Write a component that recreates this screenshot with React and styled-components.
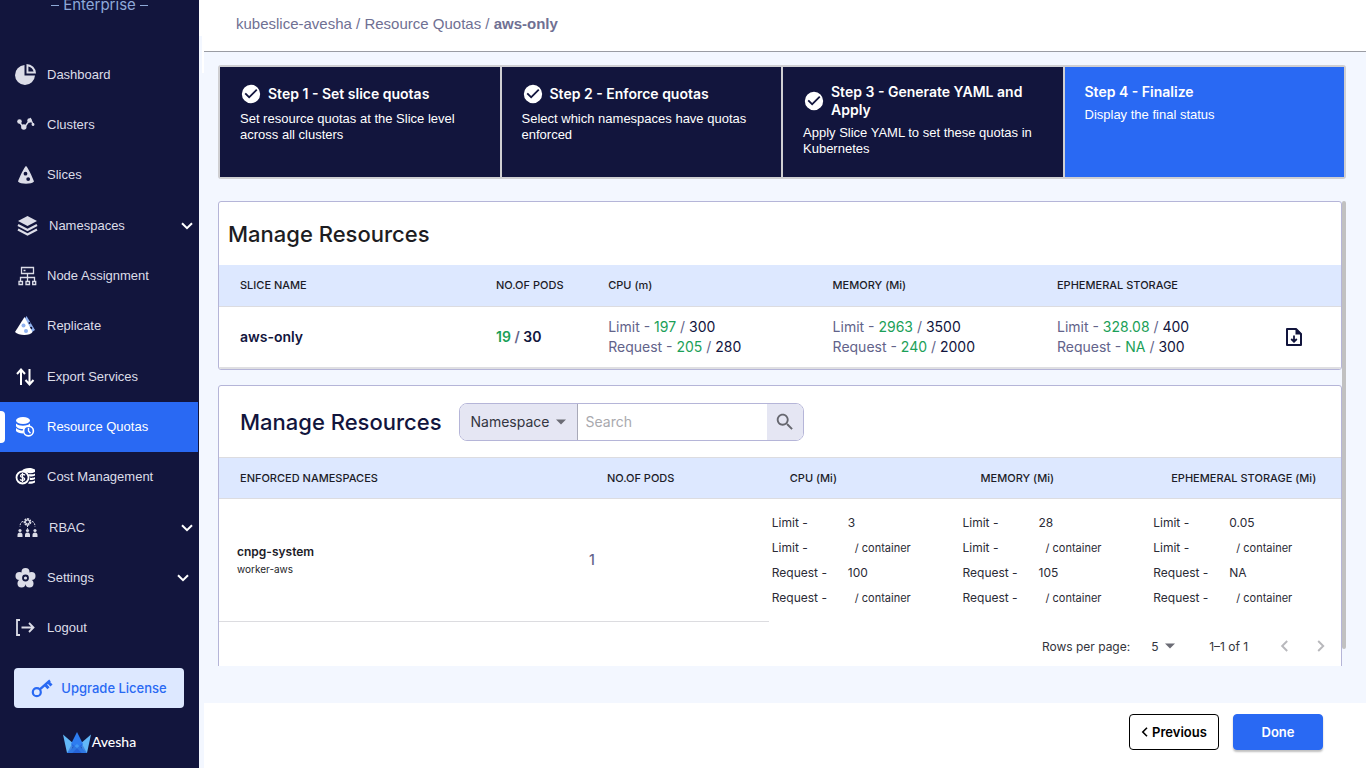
import React from "react";
import styled, { createGlobalStyle, css } from "styled-components";

const navy = "#12153d";
const blue = "#2969f3";
const pale = "#f3f7ff";
const band = "#dde8ff";
const line = "#b5b5d8";
const green = "#1ba058";
const narrow = `"Liberation Sans", Arial, sans-serif`;

const Global = createGlobalStyle`
  *, *::before, *::after { box-sizing: border-box; }
  html, body { margin: 0; background: #fff; }
  body, button, input, select { font-family: Inter, "Liberation Sans", sans-serif; }
  h2, h3, p, ul { margin: 0; padding: 0; }
  button, input, select { margin: 0; }
`;

const Page = styled.div`
  display: grid;
  grid-template-columns: 204px minmax(0, 1fr);
  align-items: start;
`;

/* ---------- sidebar ---------- */
const Rail = styled.div`
  background:
    linear-gradient(#fff, #fff) top right / 5px 36px no-repeat,
    linear-gradient(#fff, #fff) top right / 2px 73px no-repeat,
    ${pale};
  padding-right: 5px;
`;
const Sidebar = styled.aside`
  height: 768px;
  overflow: hidden;
  background: ${navy};
  display: flex;
  flex-direction: column;
`;
const Edition = styled.div`
  height: 50px;
  flex: none;
  margin-top: -6px;
  padding-bottom: 28px;
  display: flex;
  align-items: center;
  justify-content: center;
  gap: 4px;
  color: #8ea9d8;
  font-size: 15px;
  line-height: 22px;
  &::before, &::after {
    content: "";
    width: 8px;
    height: 1px;
    background: currentColor;
  }
`;
const NavList = styled.ul`
  list-style: none;
  padding-top: 6px;
`;
const NavItem = styled.li`
  height: 50px;
  &:nth-child(3n) { height: 51px; }
`;
const NavLink = styled.a`
  height: 50px;
  padding: 0 ${(p) => p.$inset || 5}px 0 14px;
  margin-right: 1px;
  display: flex;
  align-items: center;
  color: ${(p) => (p.$active ? "#fff" : "#dcdde8")};
  background: ${(p) => (p.$active ? blue : "transparent")};
  font-family: ${narrow};
  font-size: 13px;
  line-height: 18px;
  text-decoration: none;
  svg { flex: none; }
  span { flex: 1; padding-left: 9px; white-space: nowrap; }
  ${(p) =>
    p.$active &&
    css`
      padding-left: 0;
      &::before {
        content: "";
        width: 5px;
        height: 32px;
        margin-right: 9px;
        background: #fff;
        border-radius: 0 4px 4px 0;
      }
    `}
`;
const Upgrade = styled.button`
  margin: 14px 15px 0 14px;
  height: 40px;
  flex: none;
  border: 0;
  border-radius: 4px;
  background: ${band};
  color: ${blue};
  font-size: 13px;
  font-weight: 500;
  display: flex;
  align-items: center;
  justify-content: center;
  gap: 8px;
  white-space: nowrap;
`;
const Brand = styled.div`
  margin-top: 23px;
  display: flex;
  justify-content: center;
  align-items: center;
  gap: 1px;
  color: #fff;
  font: 500 14px/22px Lato, sans-serif;
`;

/* ---------- main ---------- */
const Main = styled.main`
  min-width: 0;
`;
const Header = styled.header`
  height: 52px;
  padding: 0 32px;
  border-bottom: 1px solid #9a9ca3;
  display: flex;
  align-items: center;
  padding-bottom: 4px;
  color: #6f7093;
  font-family: ${narrow};
  font-size: 15px;
  line-height: 20px;
  white-space: pre;
  a { color: inherit; text-decoration: none; }
  b { font-weight: 700; }
`;
const Body = styled.div`
  background: ${pale};
  padding: 13px 20px 37px 14px;
`;
const Steps = styled.div`
  display: grid;
  grid-template-columns: repeat(4, minmax(0, 1fr));
  gap: 2px;
  padding: 2px;
  border-radius: 3px;
  background: #cfcfd2;
`;
const Step = styled.section`
  height: 110px;
  padding: 16px 19px 0 20px;
  background: ${(p) => (p.$active ? blue : navy)};
  color: #fff;
`;
const StepHead = styled.div`
  display: flex;
  align-items: center;
  gap: 6px;
  svg { flex: none; }
  h3 { font-size: 14px; line-height: 18px; font-weight: 600; }
`;
const StepText = styled.p`
  margin-top: 6px;
  font-family: ${narrow};
  font-size: 13px;
  line-height: 16px;
`;

const Scroller = styled.div`
  margin-top: 22px;
  height: 465px;
  display: grid;
  grid-template-columns: minmax(0, 1fr) 4px;
  overflow: hidden;
`;
const Bar = styled.div`
  height: 448px;
  border-radius: 2px;
  background: #c1c1c1;
`;
const Card = styled.section`
  border: 1px solid ${line};
  border-radius: 3px;
  background: #fff;
  overflow: hidden;
  & + & { margin-top: 15px; }
`;
const Title = styled.h2`
  font-size: 22px;
  line-height: 30px;
  font-weight: 500;
  color: ${(p) => p.$color};
  white-space: nowrap;
`;
const CardHead = styled.div`
  display: flex;
  align-items: center;
  gap: 17px;
  height: ${(p) => p.$h}px;
  padding: 0 ${(p) => p.$pad}px;
`;
const Table = styled.table`
  width: 100%;
  border-collapse: collapse;
  table-layout: fixed;
  th {
    height: 41px;
    padding: 0;
    text-align: left;
    background: ${band};
    border-bottom: 1px solid #dcdce0;
    font-size: 11px;
    line-height: 16px;
    font-weight: 500;
    color: #1c1c28;
    white-space: nowrap;
  }
  td { padding: 0; white-space: nowrap; }
`;
const SliceTable = styled(Table)`
  border-bottom: 2px solid #dfdfe2;
  th, td { padding-left: 1px; }
  th:first-child, td:first-child { padding-left: 21px; }
  td { height: 62px; font-size: 14px; line-height: 20px; color: ${navy}; }
`;
const Amount = styled.div`
  color: #62638a;
  font-weight: ${(p) => (p.$bold ? 600 : 400)};
  i { font-style: normal; color: ${green}; }
  b { font-weight: inherit; color: ${navy}; }
`;
const IconButton = styled.button`
  border: 0;
  padding: 0;
  background: none;
  display: flex;
  color: inherit;
`;
const NsTable = styled(Table)`
  th { border-top: 1px solid #dcdce0; padding-left: 21px; }
  td { height: 123px; padding-left: 3px; }
  td:first-child { padding-left: 18px; }
  td:nth-child(-n+2) { border-bottom: 1px solid #dcdce0; }
`;
const Name = styled.div`
  font-size: 12px;
  line-height: 18px;
  font-weight: 600;
  color: #1c1c28;
  small { display: block; font-size: 10px; line-height: 16px; font-weight: 400; }
`;
const Pods = styled.div`
  font-size: 14px;
  line-height: 20px;
  color: #62638a;
  font-weight: 500;
`;
const Usage = styled.dl`
  margin: 0;
  display: grid;
  grid-template-columns: 76px 1fr;
  grid-auto-rows: 25px;
  align-items: center;
  font-size: 12px;
  color: #2b2b36;
  dd { margin: 0; }
  small { font-size: 11px; padding-left: 7px; }
`;
const Search = styled.form`
  height: 38px;
  width: 345px;
  display: flex;
  border: 1px solid ${line};
  border-radius: 8px;
  overflow: hidden;
  font-size: 14px;
`;
const Picker = styled.label`
  position: relative;
  display: flex;
  align-items: center;
  background: #e5e6f3;
  svg { position: absolute; right: 0; pointer-events: none; }
  select {
    appearance: none;
    border: 0;
    background: none;
    color: #333540;
    font-size: inherit;
    height: 100%;
  }
`;
const FieldPicker = styled(Picker)`
  width: 118px;
  border-right: 1px solid #a8a9b8;
  svg { right: 11px; }
  select { width: 117px; padding: 0 11px; }
`;
const SearchInput = styled.input`
  flex: 1;
  min-width: 0;
  border: 0;
  padding: 0 8px;
  font-size: 14px;
  &::placeholder { color: #a9a9ae; opacity: 1; }
`;
const SearchButton = styled.button`
  width: 36px;
  border: 0;
  padding: 0;
  background: #e5e6f3;
  color: #66676f;
  display: flex;
  align-items: center;
  justify-content: center;
`;
const Pager = styled.div`
  height: 48px;
  padding-right: 16px;
  display: flex;
  align-items: center;
  justify-content: flex-end;
  font-size: 12px;
  color: #33343c;
`;
const PagePicker = styled(Picker)`
  background: none;
  margin: 0 34px 0 21px;
  select { width: 24px; padding: 0; font-size: 12px; }
`;
const PageButton = styled(IconButton)`
  color: #b8b8bc;
  margin-left: ${(p) => p.$gap}px;
`;
const Footer = styled.footer`
  padding: 11px 43px 0 0;
  display: flex;
  justify-content: flex-end;
  gap: 14px;
`;
const Action = styled.button`
  width: 90px;
  height: 36px;
  padding: 0;
  border-radius: 4px;
  border: 1px solid ${(p) => (p.$primary ? blue : "#000")};
  background: ${(p) => (p.$primary ? blue : "#fff")};
  color: ${(p) => (p.$primary ? "#fff" : "#000")};
  box-shadow: ${(p) => (p.$primary ? "0 2px 2px rgba(0,0,0,.25)" : "none")};
  font-size: 13px;
  font-weight: 600;
  display: flex;
  align-items: center;
  justify-content: center;
  gap: 4px;
`;

/* ---------- drawings ---------- */
const Svg = ({ w = 24, h = w, vb = "0 0 24 24", children }) => (
  <svg width={w} height={h} viewBox={vb} fill="currentColor" aria-hidden="true">
    {children}
  </svg>
);
const Caret = () => (
  <svg width="10" height="6" viewBox="0 0 10 6" fill="#6b6c75" aria-hidden="true">
    <path d="M0 .5h10L5 5.500z" />
  </svg>
);
const Chevron = () => (
  <svg width="12" height="8" viewBox="0 0 12 8" fill="none" stroke="#fff" strokeWidth="2" aria-hidden="true">
    <path d="M1 1.200l5 5 5-5" />
  </svg>
);
const Check = () => (
  <Svg w={22}>
    <path d="M12 2a10 10 0 1 0 0 20 10 10 0 0 0 0-20zm-2 15-5-5 1.410-1.410L10 14.170l7.590-7.590L19 8z" />
  </Svg>
);
const Arrow = ({ dir = "left", size = 10, sw = 1.6 }) => (
  <svg width={size * 0.7} height={size} viewBox="0 0 7 10" fill="none" stroke="currentColor" strokeWidth={sw} aria-hidden="true">
    <path d={dir === "left" ? "M6 .8L1.800 5 6 9.200" : "M1 .8L5.200 5 1 9.200"} />
  </svg>
);

const icons = {
  dashboard: (
    <Svg vb="1 0 24 24">
      <path d="M11.500 2A10 10 0 1 0 22 12.500H11.500z" />
      <path fillRule="evenodd" d="M13.500 1v9.500H23A9.500 9.500 0 0 0 13.500 1zm1.900 2.400a7 7 0 0 1 5.200 5.200h-5.200z" />
    </Svg>
  ),
  clusters: (
    <Svg>
      <path d="M5 8.500l5 6.500 6.500-9 3 6.500" fill="none" stroke="currentColor" strokeWidth="1.400" />
      <circle cx="5.500" cy="8.500" r="2.300" />
      <circle cx="9.800" cy="14" r="2.700" />
      <circle cx="15.500" cy="7.500" r="2.200" />
      <circle cx="19" cy="11.500" r="1.400" />
    </Svg>
  ),
  slices: (
    <Svg>
      <path fillRule="evenodd" d="M12 3c1 0 6.500 11 8 15.500-2 3-14 3-16 0C5.500 14 11 3 12 3zm-.5 5.800a1.900 1.900 0 1 0 0 3.800 1.900 1.900 0 0 0 0-3.800zm2.700 5.400a1.900 1.900 0 1 0 0 3.800 1.900 1.900 0 0 0 0-3.800z" />
    </Svg>
  ),
  namespaces: (
    <Svg w={26} vb="0 0 26 26">
      <path d="M13.500 3L23 8l-9.500 5L4 8z" />
      <path d="M4 12l9.500 5 9.500-5M4 16.500l9.500 5 9.500-5" fill="none" stroke="currentColor" strokeWidth="2.200" />
    </Svg>
  ),
  nodes: (
    <Svg>
      <path d="M7.500 3.500h12v6h-12zM13.500 9.500v8M6.500 17v-3.500h14V17M5 17.500h3.500v3H5zM12 17.500h3.500v3H12zM18.700 17.500h3v3h-3zM9.500 6.500h2" fill="none" stroke="currentColor" strokeWidth="1.300" />
    </Svg>
  ),
  replicate: (
    <Svg>
      <path fill="#8fb1ef" d="M12.500 2l8.500 14-4.500 3L9 8z" />
      <circle cx="15.500" cy="9" r="1" fill={navy} />
      <circle cx="17" cy="14" r="1.300" fill={navy} />
      <path fill="#fff" d="M10.500 3l8 15c-2 4-14 4-17.500 0z" />
      <circle cx="9.500" cy="11.500" r="2" fill="#8fb1ef" />
      <circle cx="12" cy="17" r="2" fill="#8fb1ef" />
    </Svg>
  ),
  exports: (
    <Svg>
      <path d="M7 20V5M3 9l4-4.500L11 9M15.500 4v15M11.500 15l4 4.500 4-4.500" fill="none" stroke="#fff" strokeWidth="2" />
    </Svg>
  ),
  quotas: (
    <Svg>
      <ellipse cx="9" cy="5.500" rx="7" ry="3.500" fill="#fff" />
      <path fill="#fff" d="M2 8.500c3 3 11 3 14 0V11c-3 0-5 1.500-6 3.300-4 0-7-1-8-3zM2 13c2 2 4.500 2.500 7.300 2.500v3C6 18.500 3 17.500 2 16z" />
      <circle cx="14.500" cy="16" r="4.900" fill={blue} stroke="#fff" strokeWidth="1.600" />
      <path d="M14.500 12.800V16l2 2.200" fill="none" stroke="#fff" strokeWidth="1.400" />
    </Svg>
  ),
  cost: (
    <Svg>
      <path fill="#fff" d="M8 5.500c2-3 10-3.500 13-1V7c-3 1.500-6 1.500-8 .5zM14.500 9c2 .6 5 .3 6.500-.6v2c-1.500 1-4 1.200-5.500 1zM15.800 12.800c2 .3 4 0 5.200-.8v2c-1.200.9-3.500 1.200-5.200 1zM15.500 16.500c2 .2 4-.1 5.500-.9v2c-2 1.200-5 1.500-7 1z" />
      <circle cx="8.500" cy="12.500" r="6" fill="none" stroke="#fff" strokeWidth="1.800" />
      <path d="M11 10.300c-1-1.300-4.500-1.200-4.500.6 0 1.800 4.200 1.200 4.200 3 0 1.800-3.500 2-4.700.5M8.500 8v9" fill="none" stroke="#fff" strokeWidth="1.300" />
    </Svg>
  ),
  rbac: (
    <Svg w={26} vb="0 0 26 26">
      <circle cx="13.500" cy="7" r="2.800" fill="none" stroke="currentColor" strokeWidth="2.200" strokeDasharray="1.800 .7" />
      <circle cx="13.500" cy="7" r="2" fill="none" stroke="currentColor" />
      <path d="M9 6.500c-2 .3-3 2-3 5.500M18 6.500c2 .3 3 2 3 5.500M13.500 10v4" fill="none" stroke="currentColor" strokeDasharray="2 1.200" />
      <circle cx="6" cy="15.500" r="1.600" />
      <circle cx="13.500" cy="15.500" r="1.600" />
      <circle cx="21" cy="15.500" r="1.600" />
      <path d="M3.500 22v-2a2.500 2.500 0 0 1 5 0v2zM11 22v-2a2.500 2.500 0 0 1 5 0v2zM18.500 22v-2a2.500 2.500 0 0 1 5 0v2z" />
    </Svg>
  ),
  settings: (
    <Svg>
      <circle cx="11.500" cy="6" r="4" />
      <circle cx="17.500" cy="10" r="4" />
      <circle cx="15.500" cy="17.500" r="4" />
      <circle cx="7.500" cy="17.500" r="4" />
      <circle cx="5.500" cy="10" r="4" />
      <circle cx="11.500" cy="12.500" r="6" />
      <circle cx="11.500" cy="12" r="2.500" fill="none" stroke={navy} strokeWidth="1.800" />
    </Svg>
  ),
  logout: (
    <Svg>
      <path d="M6 4H3v15h3M7.500 11.500H19M15 7l4.500 4.500L15 16" fill="none" stroke="currentColor" strokeWidth="1.800" />
    </Svg>
  ),
};

const nav = [
  { icon: "dashboard", label: "Dashboard" },
  { icon: "clusters", label: "Clusters" },
  { icon: "slices", label: "Slices" },
  { icon: "namespaces", label: "Namespaces", more: true },
  { icon: "nodes", label: "Node Assignment" },
  { icon: "replicate", label: "Replicate" },
  { icon: "exports", label: "Export Services" },
  { icon: "quotas", label: "Resource Quotas" },
  { icon: "cost", label: "Cost Management" },
  { icon: "rbac", label: "RBAC", more: true },
  { icon: "settings", label: "Settings", more: true, inset: 9 },
  { icon: "logout", label: "Logout" },
];

const steps = [
  { title: "Step 1 - Set slice quotas", text: "Set resource quotas at the Slice level across all clusters", done: true },
  { title: "Step 2 - Enforce quotas", text: "Select which namespaces have quotas enforced", done: true },
  { title: "Step 3 - Generate YAML and Apply", text: "Apply Slice YAML to set these quotas in Kubernetes", done: true },
  { title: "Step 4 - Finalize", text: "Display the final status", active: true },
];

const totals = [
  [["Limit", "197", "300"], ["Request", "205", "280"]],
  [["Limit", "2963", "3500"], ["Request", "240", "2000"]],
  [["Limit", "328.08", "400"], ["Request", "NA", "300"]],
];

const usage = [
  ["3", "100"],
  ["28", "105"],
  ["0.05", "NA"],
];

export default function App() {
  return (
    <>
      <Global />
      <Page>
        <Rail>
          <Sidebar>
            <Edition>Enterprise</Edition>
            <nav>
              <NavList>
                {nav.map(({ icon, label, more, inset }) => (
                  <NavItem key={label}>
                    <NavLink href="#" $active={label === "Resource Quotas"} $inset={inset}>
                      {icons[icon]}
                      <span>{label}</span>
                      {more && <Chevron />}
                    </NavLink>
                  </NavItem>
                ))}
              </NavList>
            </nav>
            <Upgrade>
              <svg width="22" height="20" viewBox="0 0 22 20" fill="none" stroke={blue} aria-hidden="true">
                <circle cx="5.800" cy="14.200" r="4" strokeWidth="2.200" />
                <path d="M8.800 11.300L19 2.500" strokeWidth="2.400" />
                <path d="M14 6.500l3.500 3.700M17 4l3.500 3.500" strokeWidth="3" />
              </svg>
              Upgrade License
            </Upgrade>
            <Brand>
              <svg width="28" height="21" viewBox="0 0 28 21" aria-hidden="true">
                <path fill="#62b8f8" d="M0 2.500L11 12 7 21H4z" />
                <path fill="#62b8f8" d="M28 2.500L17 12l4 9h3z" />
                <path fill="#2d7cf0" d="M14 0l6 12-6 9-6-9z" />
                <path fill="#3f98f6" d="M4 21l10-9 10 9z" />
                <path fill="#2563d8" d="M9 21l5-5 5 5z" />
                <path fill="#1d56cf" d="M4 21l5-9 5 4-5 5zM24 21l-5-9-5 4 5 5z" opacity=".5" />
              </svg>
              Avesha
            </Brand>
          </Sidebar>
        </Rail>
        <Main>
          <Header>
            <a href="#">kubeslice-avesha</a> / <a href="#">Resource Quotas</a> / <b>aws-only</b>
          </Header>
          <Body>
            <Steps>
              {steps.map((s) => (
                <Step key={s.title} $active={s.active}>
                  <StepHead>
                    {s.done && <Check />}
                    <h3>{s.title}</h3>
                  </StepHead>
                  <StepText>{s.text}</StepText>
                </Step>
              ))}
            </Steps>
            <Scroller>
              <div>
                <Card>
                  <CardHead $h={63} $pad={9}>
                    <Title $color="#1d1d22">Manage Resources</Title>
                  </CardHead>
                  <SliceTable>
                    <colgroup>
                      <col style={{ width: "24.600%" }} />
                      <col style={{ width: "10%" }} />
                      <col style={{ width: "20%" }} />
                      <col style={{ width: "20%" }} />
                      <col style={{ width: "20.200%" }} />
                      <col />
                    </colgroup>
                    <thead>
                      <tr>
                        <th>SLICE NAME</th>
                        <th>NO.OF PODS</th>
                        <th>CPU (m)</th>
                        <th>MEMORY (Mi)</th>
                        <th>EPHEMERAL STORAGE</th>
                        <th aria-label="Download" />
                      </tr>
                    </thead>
                    <tbody>
                      <tr>
                        <td><Amount $bold><b>aws-only</b></Amount></td>
                        <td><Amount $bold><i>19</i> / <b>30</b></Amount></td>
                        {totals.map((rows, i) => (
                          <td key={i}>
                            {rows.map(([k, used, max]) => (
                              <Amount key={k}>{k} - <i>{used}</i> / <b>{max}</b></Amount>
                            ))}
                          </td>
                        ))}
                        <td>
                          <IconButton aria-label="Download YAML">
                            <svg width="20" height="20" viewBox="0 0 20 20" fill="none" stroke={navy} strokeWidth="2" aria-hidden="true">
                              <path d="M3 2h9l5 5v11H3z" strokeLinejoin="round" />
                              <path d="M11.500 1l6.500 6.500h-6.500z" fill={navy} stroke="none" />
                              <path d="M10 8.500v6M7.200 12l2.800 2.700 2.800-2.700" strokeWidth="1.800" />
                            </svg>
                          </IconButton>
                        </td>
                      </tr>
                    </tbody>
                  </SliceTable>
                </Card>
                <Card>
                  <CardHead $h={71} $pad={21}>
                    <Title $color={navy}>Manage Resources</Title>
                    <Search onSubmit={(e) => e.preventDefault()}>
                      <FieldPicker>
                        <select aria-label="Search field"><option>Namespace</option></select>
                        <Caret />
                      </FieldPicker>
                      <SearchInput aria-label="Search" placeholder="Search" />
                      <SearchButton aria-label="Run search">
                        <Svg w={22}>
                          <path d="M15.500 14h-.79l-.28-.27C15.410 12.590 16 11.110 16 9.500 16 5.910 13.090 3 9.500 3S3 5.910 3 9.500 5.910 16 9.500 16c1.610 0 3.090-.59 4.230-1.570l.27.28v.79l5 4.990L20.490 19l-4.990-5zm-6 0C7.010 14 5 11.990 5 9.500S7.010 5 9.500 5 14 7.010 14 9.500 11.990 14 9.500 14z" />
                        </Svg>
                      </SearchButton>
                    </Search>
                  </CardHead>
                  <NsTable>
                    <colgroup>
                      <col style={{ width: "32.700%" }} />
                      <col style={{ width: "16.300%" }} />
                      <col style={{ width: "17%" }} />
                      <col style={{ width: "17%" }} />
                      <col />
                    </colgroup>
                    <thead>
                      <tr>
                        <th>ENFORCED NAMESPACES</th>
                        <th>NO.OF PODS</th>
                        <th>CPU (Mi)</th>
                        <th>MEMORY (Mi)</th>
                        <th>EPHEMERAL STORAGE (Mi)</th>
                      </tr>
                    </thead>
                    <tbody>
                      <tr>
                        <td><Name>cnpg-system<small>worker-aws</small></Name></td>
                        <td><Pods>1</Pods></td>
                        {usage.map(([limit, request]) => (
                          <td key={limit}>
                            <Usage>
                              <dt>Limit -</dt><dd>{limit}</dd>
                              <dt>Limit -</dt><dd><small>/ container</small></dd>
                              <dt>Request -</dt><dd>{request}</dd>
                              <dt>Request -</dt><dd><small>/ container</small></dd>
                            </Usage>
                          </td>
                        ))}
                      </tr>
                    </tbody>
                  </NsTable>
                  <Pager>
                    <span>Rows per page:</span>
                    <PagePicker>
                      <select aria-label="Rows per page"><option>5</option></select>
                      <Caret />
                    </PagePicker>
                    <span>1–1 of 1</span>
                    <PageButton aria-label="Previous page" $gap={32}><Arrow size={12} /></PageButton>
                    <PageButton aria-label="Next page" $gap={28}><Arrow dir="right" size={12} /></PageButton>
                  </Pager>
                </Card>
              </div>
              <Bar />
            </Scroller>
          </Body>
          <Footer>
            <Action><Arrow />Previous</Action>
            <Action $primary>Done</Action>
          </Footer>
        </Main>
      </Page>
    </>
  );
}
